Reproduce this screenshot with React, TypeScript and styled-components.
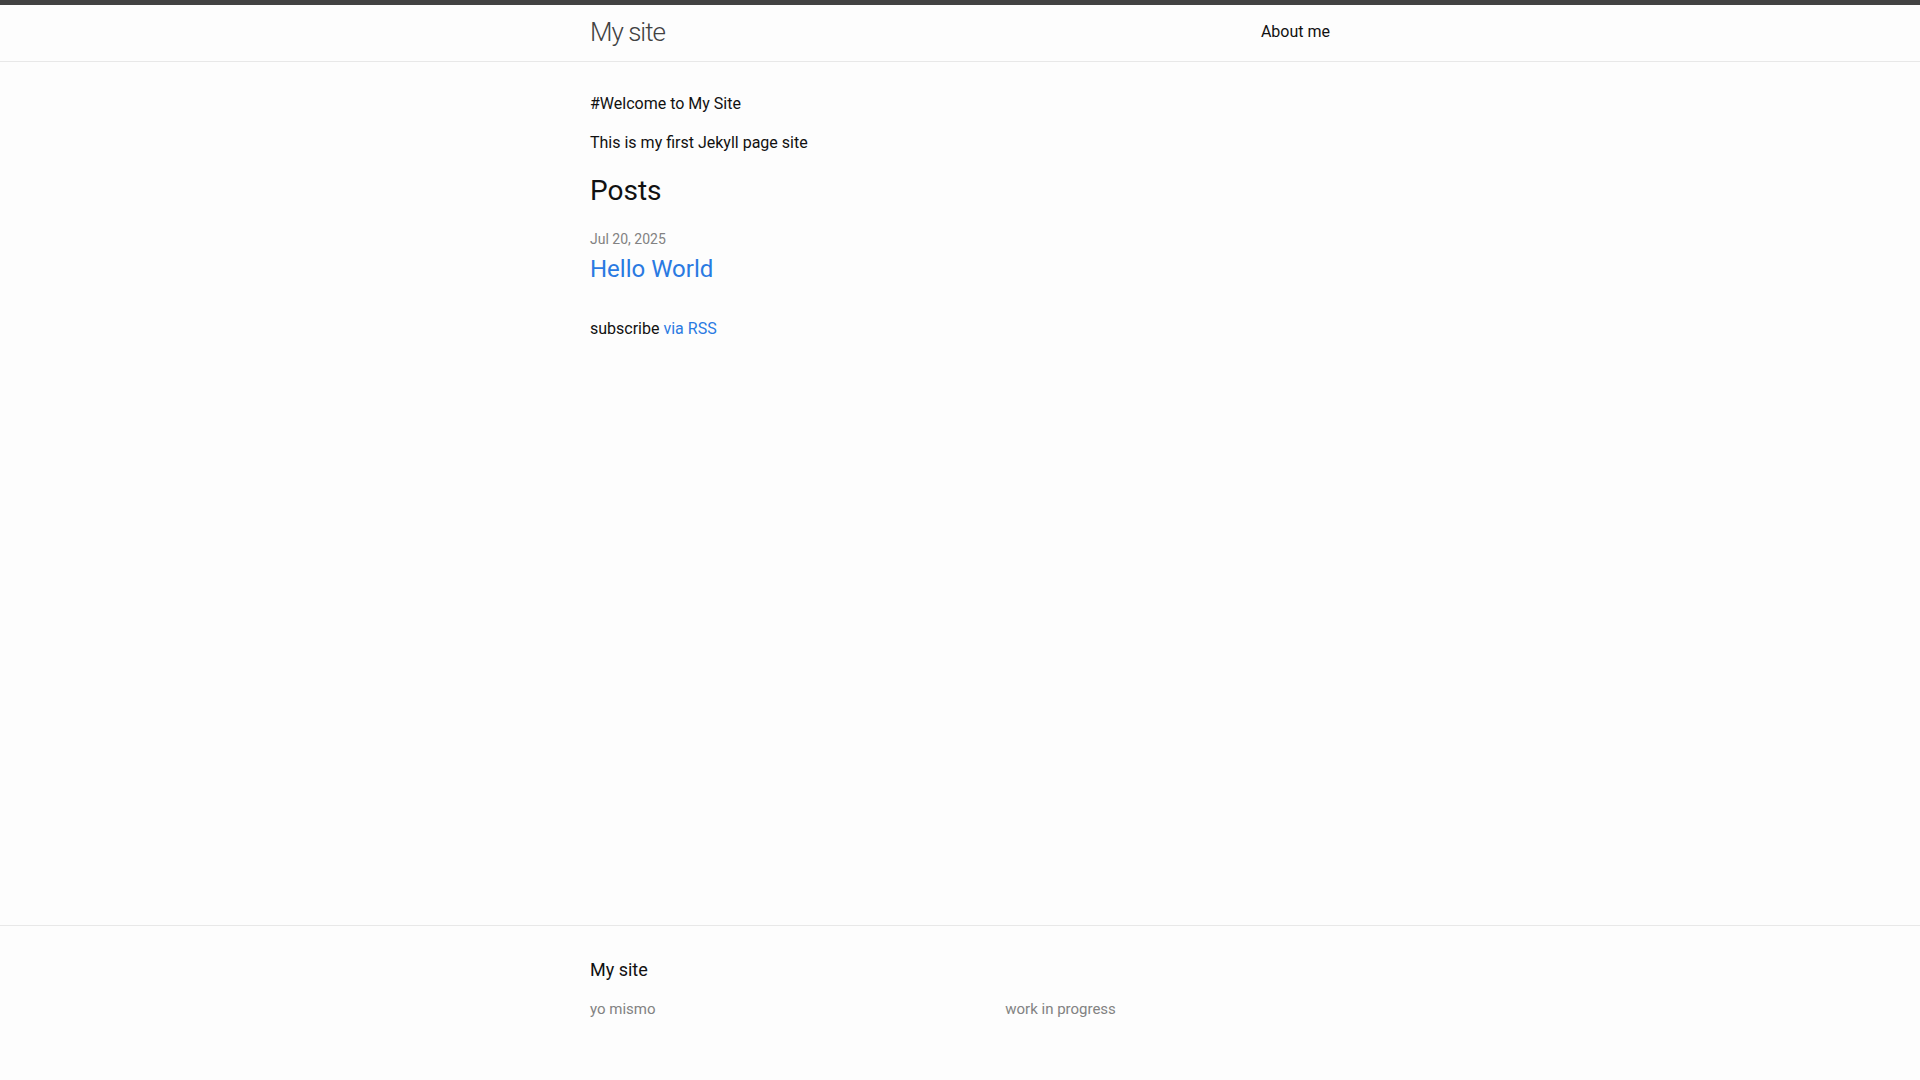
import React from "react";
import styled, { createGlobalStyle } from "styled-components";

const GlobalStyle = createGlobalStyle`
  html, body {
    margin: 0;
    padding: 0;
  }
  body {
    font: 400 16px/1.5 Roboto, "Liberation Sans", sans-serif;
    color: #111111;
    background-color: #fdfdfd;
  }
  h1, h2, h3, p, ul {
    margin: 0 0 15px;
    padding: 0;
  }
  a {
    color: #2a7ae2;
    text-decoration: none;
  }
`;

const Page = styled.div`
  display: flex;
  flex-direction: column;
  min-height: 100vh;
`;

const Wrapper = styled.div`
  max-width: 740px;
  margin: 0 auto;
  padding: 0 30px;
`;

const Header = styled.header`
  border-top: 5px solid #424242;
  border-bottom: 1px solid #e8e8e8;
  min-height: 56px;
`;

const HeaderInner = styled(Wrapper)`
  display: flex;
  justify-content: space-between;
  align-items: center;
`;

const SiteTitle = styled.a`
  font-size: 26px;
  font-weight: 300;
  line-height: 54px;
  letter-spacing: -1px;
  color: #424242;
`;

const NavLink = styled.a`
  color: #111111;
  line-height: 54px;
  margin-left: 20px;
`;

const Main = styled.main`
  flex: 1;
  padding: 30px 0;
`;

const PostListHeading = styled.h2`
  font-size: 28px;
  font-weight: 400;
  line-height: 1.5;
`;

const PostList = styled.ul`
  list-style: none;
  margin-left: 0;
`;

const PostItem = styled.li`
  margin-bottom: 30px;
`;

// inline, so it sits in a 24px line box like the theme's span
const PostMeta = styled.span`
  font-size: 14px;
  color: #828282;
`;

const PostTitle = styled.h3`
  font-size: 24px;
  font-weight: 400;
  line-height: 1.5;
`;

const PostLink = styled.a`
  display: block;
`;

const Footer = styled.footer`
  border-top: 1px solid #e8e8e8;
  padding: 30px 0;
`;

const FooterHeading = styled.h2`
  font-size: 18px;
  font-weight: 400;
  line-height: 1.5;
`;

const FooterCols = styled.div`
  display: flex;
  margin-left: -15px;
  font-size: 15px;
  color: #828282;
`;

const FooterCol = styled.div<{ $width: number }>`
  width: calc(${(p) => p.$width}% - 15px);
  padding-left: 15px;
  margin-bottom: 15px;
`;

const ContactList = styled.ul`
  list-style: none;
  margin-left: 0;
`;

const App = () => (
  <Page>
    <GlobalStyle />
    <Header>
      <HeaderInner>
        <SiteTitle href="#">My site</SiteTitle>
        <nav>
          <NavLink href="#">About me</NavLink>
        </nav>
      </HeaderInner>
    </Header>
    <Main>
      <Wrapper>
        <p>#Welcome to My Site</p>
        <p>This is my first Jekyll page site</p>
        <PostListHeading>Posts</PostListHeading>
        <PostList>
          <PostItem>
            <PostMeta>Jul 20, 2025</PostMeta>
            <PostTitle>
              <PostLink href="#">Hello World</PostLink>
            </PostTitle>
          </PostItem>
        </PostList>
        <p>
          subscribe <a href="#">via RSS</a>
        </p>
      </Wrapper>
    </Main>
    <Footer>
      <Wrapper>
        <FooterHeading>My site</FooterHeading>
        <FooterCols>
          <FooterCol $width={35}>
            <ContactList>
              <li>yo mismo</li>
            </ContactList>
          </FooterCol>
          <FooterCol $width={20} />
          <FooterCol $width={45}>
            <p>work in progress</p>
          </FooterCol>
        </FooterCols>
      </Wrapper>
    </Footer>
  </Page>
);

export default App;
